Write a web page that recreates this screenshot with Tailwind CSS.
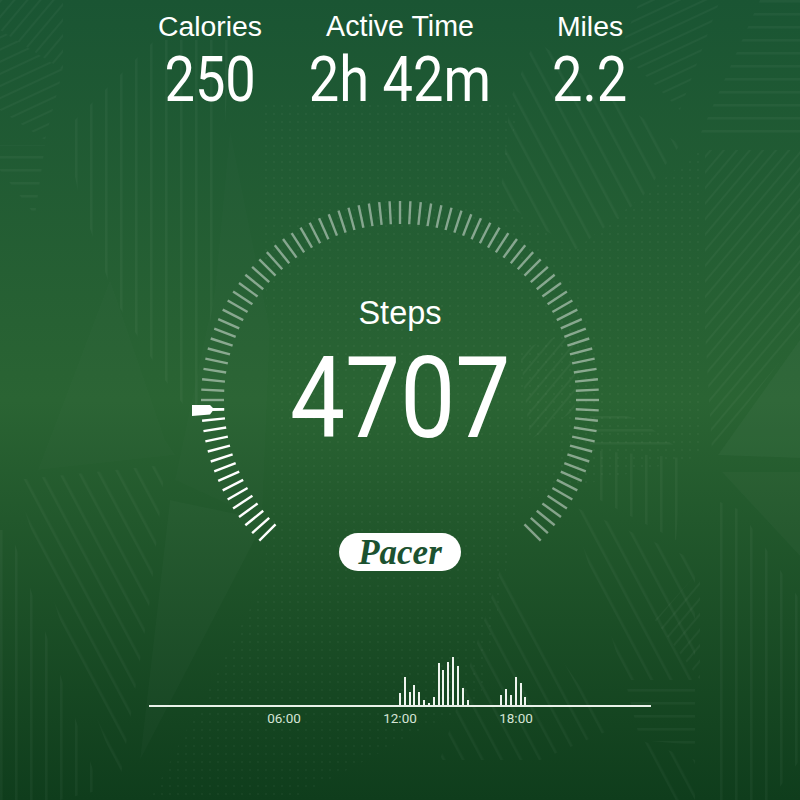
<!DOCTYPE html>
<html lang="en">
<head>
  <meta charset="UTF-8" />
  <title>Pacer | Steps</title>
  <script src="https://cdn.jsdelivr.net/npm/@tailwindcss/browser@4"></script>
</head>
<body class="bg-[#1c5632]">
  <div class="relative w-[800px] h-[800px] overflow-hidden bg-gradient-to-b from-[#1a5533] via-[#2a6433] via-50% to-[#0f3d1c] text-white font-['Liberation_Sans',sans-serif]">

    <!-- background facets -->
    <svg class="absolute inset-0" width="800" height="800" viewBox="0 0 800 800" fill="none">
      <defs>
        <pattern id="vert" width="15" height="15" patternUnits="userSpaceOnUse"><rect width="2.5" height="15" fill="#fff" fill-opacity=".035"/></pattern>
        <pattern id="horiz" width="15" height="13" patternUnits="userSpaceOnUse"><rect width="15" height="2.5" fill="#fff" fill-opacity=".035"/></pattern>
        <pattern id="back" width="17" height="17" patternUnits="userSpaceOnUse" patternTransform="rotate(-28)"><rect width="2.5" height="17" fill="#fff" fill-opacity=".035"/></pattern>
        <pattern id="fwd" width="10" height="10" patternUnits="userSpaceOnUse" patternTransform="rotate(40)"><rect width="2" height="10" fill="#fff" fill-opacity=".035"/></pattern>
        <pattern id="flat" width="11" height="11" patternUnits="userSpaceOnUse" patternTransform="rotate(65)"><rect width="2" height="11" fill="#fff" fill-opacity=".035"/></pattern>
        <pattern id="dots" width="8" height="8" patternUnits="userSpaceOnUse"><circle cx="2" cy="2" r="1" fill="#fff" fill-opacity=".04"/></pattern>
      </defs>
      <!-- lighter flat facets -->
      <polygon points="38,470 110,280 165,440 175,455" fill="#fff" fill-opacity=".012"/>
      <polygon points="170,500 265,520 140,760" fill="#fff" fill-opacity=".018"/>
      <polygon points="230,130 270,330 262,520 175,480 215,290" fill="#fff" fill-opacity=".012"/>
      <polygon points="718,455 800,340 800,458" fill="#fff" fill-opacity=".03"/>
      <polygon points="722,472 800,472 800,556" fill="#fff" fill-opacity=".022"/>
      <!-- hatched facets -->
      <polygon points="0,0 63,0 63,70 0,30" fill="url(#fwd)"/>
      <polygon points="0,30 63,70 45,140 0,110" fill="url(#flat)"/>
      <polygon points="0,145 45,145 35,215 0,170" fill="url(#horiz)"/>
      <polygon points="65,130 155,40 230,40 215,290 195,420 165,380 115,300 80,200" fill="url(#vert)"/>
      <polygon points="535,40 680,145 640,200 575,250 500,200 510,100" fill="url(#back)"/>
      <polygon points="640,0 720,0 680,110 620,50" fill="url(#flat)"/>
      <polygon points="700,135 760,0 800,0 800,135" fill="url(#horiz)"/>
      <polygon points="705,150 800,150 800,335 712,450 705,330" fill="url(#fwd)"/>
      <polygon points="520,350 575,330 575,410 530,440" fill="url(#fwd)"/>
      <polygon points="590,405 640,420 680,450 590,450" fill="url(#horiz)"/>
      <polygon points="590,450 682,458 676,540 600,500" fill="url(#vert)"/>
      <polygon points="570,505 695,560 695,680 625,680" fill="url(#back)"/>
      <polygon points="625,680 695,680 695,745 640,740" fill="url(#horiz)"/>
      <polygon points="640,740 695,760 695,800 665,800" fill="url(#back)"/>
      <polygon points="715,500 740,510 800,600 800,760 770,800 715,800" fill="url(#vert)"/>
      <polygon points="655,620 700,570 700,680" fill="url(#fwd)"/>
      <polygon points="15,480 165,465 150,600 120,780 60,620" fill="url(#back)"/>
      <polygon points="0,530 10,530 100,790 60,800 0,800" fill="url(#vert)"/>
      <polygon points="500,570 610,730 540,760 440,760" fill="url(#back)"/>
      <polygon points="260,100 520,100 500,200 575,250 700,150 705,455 520,500 480,700 290,800 150,800 265,580 270,420" fill="url(#dots)"/>
    </svg>

    <div class="relative flex flex-col items-center">
      <!-- totals -->
      <div class="flex justify-center w-full pt-[9px]">
        <div class="w-[190px] flex flex-col items-center">
          <span class="text-[28.4px] leading-[34px]">Calories</span>
          <span class="font-['Roboto',sans-serif] text-[63px] leading-[74px] scale-x-[0.86]">250</span>
        </div>
        <div class="w-[190px] flex flex-col items-center">
          <span class="text-[28.6px] leading-[34px]">Active Time</span>
          <span class="font-['Roboto',sans-serif] text-[63px] leading-[74px] scale-x-[0.86] whitespace-nowrap">2h 42m</span>
        </div>
        <div class="w-[190px] flex flex-col items-center">
          <span class="text-[28.4px] leading-[34px]">Miles</span>
          <span class="font-['Roboto',sans-serif] text-[63px] leading-[74px] scale-x-[0.86]">2.2</span>
        </div>
      </div>

      <!-- gauge -->
      <div class="relative w-[420px] h-[420px] mt-[73px] flex flex-col items-center pt-[103px]">
        <svg id="gauge" class="absolute inset-0" width="420" height="420" viewBox="-210 -210 420 420"></svg>
        <span class="text-[32.5px] leading-[40px]">Steps</span>
        <span class="font-['Roboto',sans-serif] text-[114px] leading-[130px] scale-x-[0.86]">4707</span>
        <div class="mt-[70px] w-[122px] h-[38px] rounded-full bg-white flex items-center justify-center">
          <span class="font-['Liberation_Serif',serif] font-bold italic text-[35px] leading-none text-[#1c5230]">Pacer</span>
        </div>
      </div>

      <!-- hourly chart -->
      <div class="w-[502px] mt-[45px]">
        <div id="bars" class="grid grid-cols-[repeat(104,1fr)] items-end justify-items-start h-[50px] -translate-x-px"></div>
        <div class="h-[2px] bg-[#e9f1e9]"></div>
        <div class="relative h-[24px] text-[13.5px] text-[#d5e4d6] font-['Roboto',sans-serif]">
          <span class="absolute left-[135px] w-[0px] top-[1px] flex justify-center">06:00</span>
          <span class="absolute left-[251px] w-[0px] top-[1px] flex justify-center">12:00</span>
          <span class="absolute left-[367px] w-[0px] top-[1px] flex justify-center">18:00</span>
        </div>
      </div>
    </div>
  </div>

  <script>
    // gauge ticks, 3 degrees apart, from bottom left round to bottom right
    const gauge = document.getElementById("gauge");
    const NS = "http://www.w3.org/2000/svg";
    for (let i = 0; i <= 90; i++) {
      const a = (225 - i * 3) * Math.PI / 180;
      const line = document.createElementNS(NS, "line");
      line.setAttribute("x1", Math.cos(a) * 176);
      line.setAttribute("y1", -Math.sin(a) * 176);
      line.setAttribute("x2", Math.cos(a) * 199);
      line.setAttribute("y2", -Math.sin(a) * 199);
      line.setAttribute("stroke", "#fff");
      line.setAttribute("stroke-width", "2.4");
      line.setAttribute("stroke-opacity", i <= 14 ? "1" : ".45");
      gauge.appendChild(line);
    }
    // marker sits on the last white tick
    const marker = document.createElementNS(NS, "path");
    marker.setAttribute("d", "M-208 5H-190L-187 8H-176V10.5H-187L-190 14.5L-208 16Z");
    marker.setAttribute("fill", "#fff");
    gauge.appendChild(marker);

    // steps per 15 minutes, starting at slot 52 on the axis
    const steps = [12,28,13,20,13,5,2,8,42,35,43,48,39,17,5,0,0,0,0,0,0,10,16,10,28,22,8];
    const bars = document.getElementById("bars");
    for (let i = 0; i < 104; i++) {
      const bar = document.createElement("div");
      bar.className = "w-[2px] bg-[#eef4ee]";
      bar.style.height = (steps[i - 52] || 0) + "px";
      bars.appendChild(bar);
    }
  </script>
</body>
</html>
